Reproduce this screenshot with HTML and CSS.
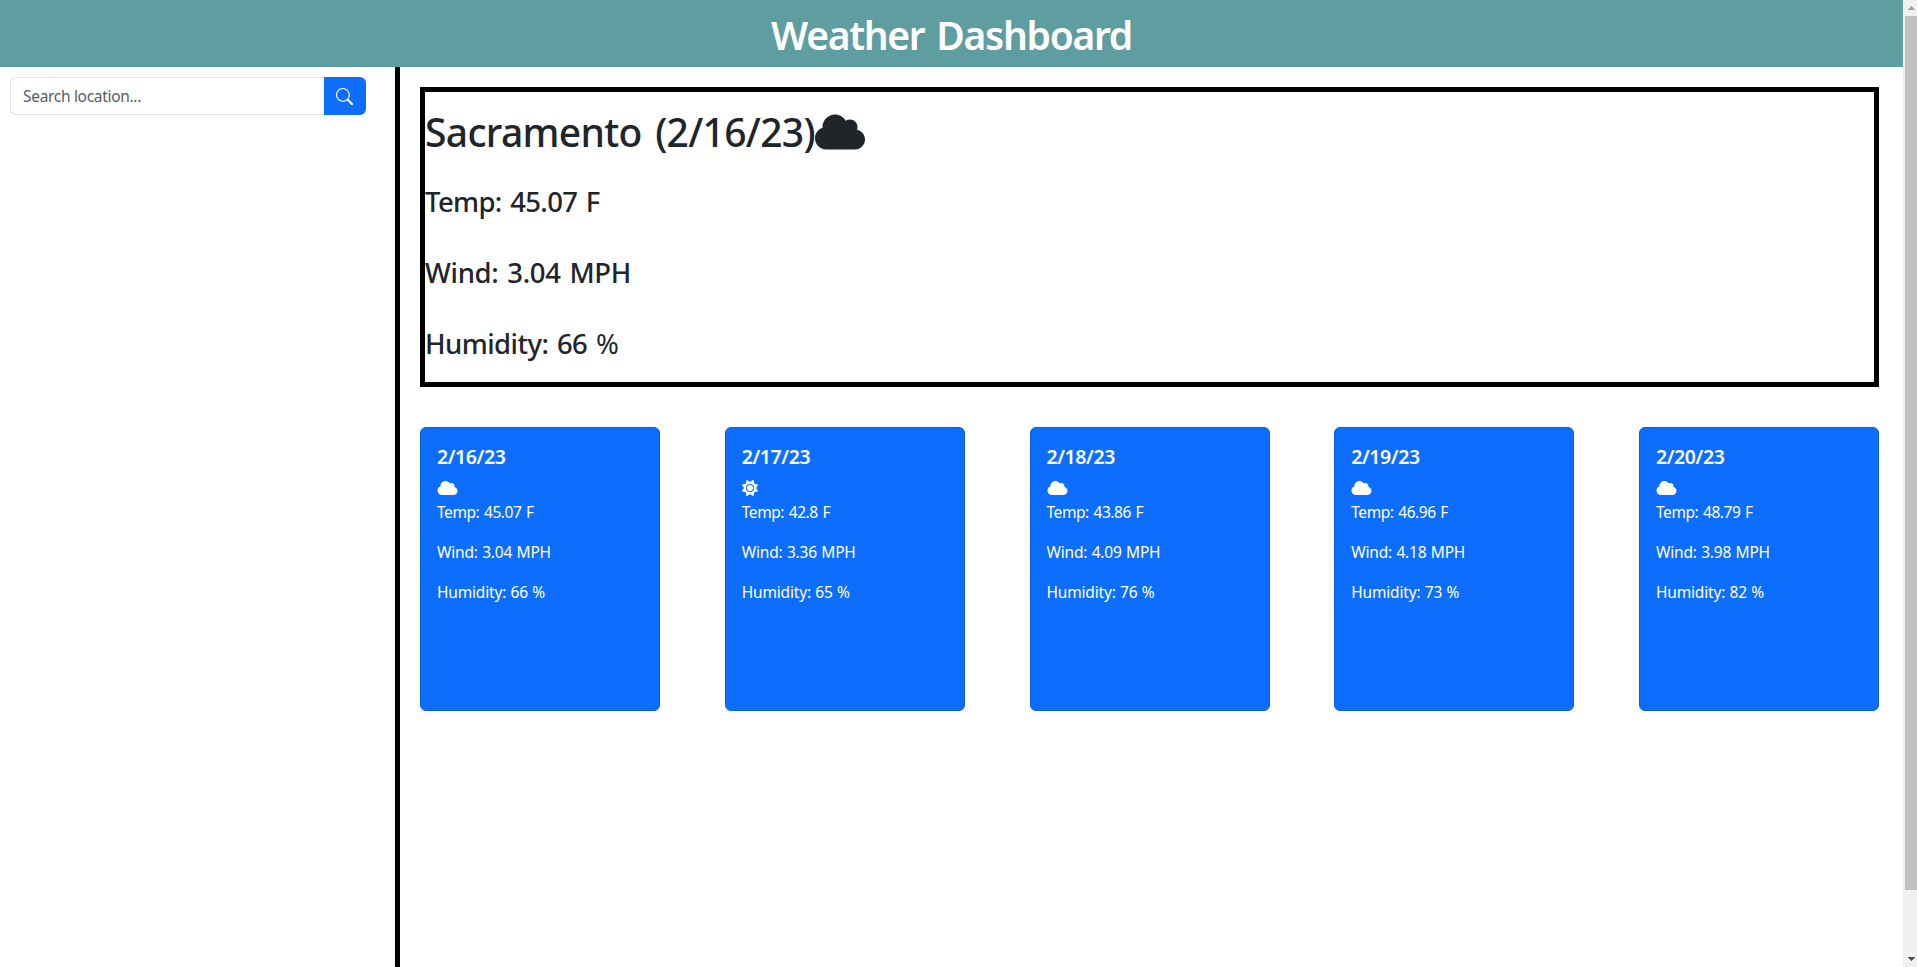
FILE: index.html
```
<!DOCTYPE html>
<html lang="en">
<head>
<meta charset="utf-8">
<title>Weather Dashboard</title>
<link rel="stylesheet" href="styles.css">
</head>
<body>
<svg class="sprite" aria-hidden="true">
  <symbol id="cloud" viewBox="0 0 640 512"><path d="M0 336c0 79.500 64.500 144 144 144H512c70.700 0 128-57.300 128-128c0-61.900-44-113.600-102.400-125.400c4.100-10.700 6.400-22.400 6.400-34.600c0-53-43-96-96-96c-19.700 0-38.100 6-53.300 16.200C367 64.200 315.300 32 256 32C167.600 32 96 103.600 96 192c0 2.700 .1 5.400 .2 8.100C40.200 219.800 0 273.200 0 336z"/></symbol>
  <symbol id="sun" viewBox="0 0 512 512"><path d="M361.5 1.2c5 2.100 8.600 6.600 9.600 11.900L391 121l107.900 19.800c5.300 1 9.800 4.600 11.900 9.600s1.500 10.700-1.600 15.200L446.900 256l62.300 90.300c3.100 4.500 3.700 10.200 1.600 15.200s-6.600 8.600-11.900 9.600L391 391 371.100 498.900c-1 5.300-4.600 9.800-9.600 11.900s-10.700 1.500-15.200-1.600L256 446.900l-90.300 62.300c-4.500 3.100-10.200 3.700-15.200 1.600s-8.600-6.600-9.600-11.900L121 391 13.100 371.100c-5.300-1-9.800-4.600-11.900-9.600s-1.500-10.700 1.600-15.200L65.100 256 2.800 165.700c-3.100-4.500-3.700-10.200-1.600-15.200s6.600-8.600 11.900-9.600L121 121 140.900 13.100c1-5.300 4.600-9.800 9.600-11.900s10.700-1.500 15.200 1.600L256 65.100 346.300 2.800c4.500-3.100 10.200-3.700 15.200-1.600zM160 256a96 96 0 1 1 192 0 96 96 0 1 1 -192 0zm224 0a128 128 0 1 0 -256 0 128 128 0 1 0 256 0z"/></symbol>
</svg>
<div class="window">
  <div class="page">
    <header class="header"><h1 class="title">Weather Dashboard</h1></header>
    <div class="content">
      <aside class="sidebar">
        <form class="search">
          <input class="search-input" type="text" placeholder="Search location...">
          <button class="search-button" type="button" aria-label="Search">
            <svg width="17" height="17" viewBox="0 0 16 16" fill="currentColor"><path d="M11.742 10.344a6.500 6.500 0 1 0-1.397 1.398h-.001c.03.040.062.078.098.115l3.850 3.850a1 1 0 0 0 1.415-1.414l-3.850-3.850a1.007 1.007 0 0 0-.115-.1zM12 6.500a5.500 5.500 0 1 1-11 0 5.500 5.500 0 0 1 11 0z"/></svg>
          </button>
        </form>
      </aside>
      <main class="main">
        <section class="current">
          <h2 class="city"><span>Sacramento (2/16/23)</span><svg class="city-icon"><use href="#cloud"/></svg></h2>
          <p class="reading reading-temp">Temp: 45.07 F</p>
          <p class="reading reading-wind">Wind: 3.04 MPH</p>
          <p class="reading reading-humidity">Humidity: 66 <span class="percent">%</span></p>
        </section>
        <section class="forecast">
          <article class="card">
            <h3 class="date">2/16/23</h3>
            <svg class="icon icon-cloud"><use href="#cloud"/></svg>
            <p class="line temp">Temp: 45.07 F</p><p class="line">Wind: 3.04 MPH</p><p class="line">Humidity: 66 %</p>
          </article>
          <article class="card">
            <h3 class="date">2/17/23</h3>
            <svg class="icon icon-sun"><use href="#sun"/></svg>
            <p class="line temp">Temp: 42.8 F</p><p class="line">Wind: 3.36 MPH</p><p class="line">Humidity: 65 %</p>
          </article>
          <article class="card">
            <h3 class="date">2/18/23</h3>
            <svg class="icon icon-cloud"><use href="#cloud"/></svg>
            <p class="line temp">Temp: 43.86 F</p><p class="line">Wind: 4.09 MPH</p><p class="line">Humidity: 76 %</p>
          </article>
          <article class="card">
            <h3 class="date">2/19/23</h3>
            <svg class="icon icon-cloud"><use href="#cloud"/></svg>
            <p class="line temp">Temp: 46.96 F</p><p class="line">Wind: 4.18 MPH</p><p class="line">Humidity: 73 %</p>
          </article>
          <article class="card">
            <h3 class="date">2/20/23</h3>
            <svg class="icon icon-cloud"><use href="#cloud"/></svg>
            <p class="line temp">Temp: 48.79 F</p><p class="line">Wind: 3.98 MPH</p><p class="line">Humidity: 82 %</p>
          </article>
        </section>
      </main>
    </div>
  </div>
  <div class="scrollbar">
    <svg class="arrow arrow-up" width="7" height="4" viewBox="0 0 7 4" shape-rendering="crispEdges"><path d="M3 0h1v1h1v1h1v1h1v1H0V3h1V2h1V1h1z"/></svg>
    <div class="thumb"></div>
    <svg class="arrow arrow-down" width="7" height="4" viewBox="0 0 7 4" shape-rendering="crispEdges"><path d="M0 0h7v1H6v1H5v1H4v1H3V3H2V2H1V1H0z"/></svg>
  </div>
</div>
</body>
</html>
```
FILE: styles.css
```
* { box-sizing: border-box; margin: 0; padding: 0; }

body {
  height: 100vh;
  overflow: hidden;
  background: #fff;
  color: #212529;
  font-family: "Noto Sans", "Open Sans", sans-serif;
  font-size: 15.5px;
}

.sprite { display: none; }
.window { display: flex; height: 100%; }
.page { flex: 1; display: flex; flex-direction: column; }

.header { height: 67px; background: #5f9ea0; color: #fff; text-align: center; }
.title {
  font-size: 39px;
  font-weight: 600;
  line-height: 69px;
  letter-spacing: -1.3px;
  word-spacing: 3px;
}

.content { flex: 1; display: flex; }
.sidebar { width: 400px; padding: 10px 29px 0 10px; border-right: 5px solid #000; }

.search { display: flex; height: 38px; }
.search-input {
  flex: 1;
  min-width: 0;
  padding: 0 12px;
  border: 1px solid #dee2e6;
  border-right: 0;
  border-radius: 6px 0 0 6px;
  font: inherit;
  letter-spacing: -0.31px;
}
.search-input::placeholder { color: #595c5f; opacity: 1; }
.search-button {
  display: flex;
  align-items: center;
  justify-content: center;
  width: 42px;
  padding-right: 1px;
  border: 0;
  border-radius: 0 6px 6px 0;
  background: #0d6efd;
  color: #fff;
}

.main { flex: 1; padding: 20px 24px 0 20px; }
.current { height: 300px; padding-top: 16px; border: 5px solid #000; }
.city {
  display: flex;
  align-items: center;
  height: 48px;
  margin-bottom: 10px;
  font-size: 39px;
  font-weight: 500;
  line-height: 48px;
  letter-spacing: -0.68px;
  word-spacing: 4px;
}
.city-icon { width: 50px; height: 40px; fill: #212529; }
.reading { font-size: 27.5px; font-weight: 500; line-height: 71px; word-spacing: 2px; }
.reading-temp { letter-spacing: -0.65px; }
.reading-wind { letter-spacing: -0.33px; }
.reading-humidity { letter-spacing: -0.55px; }
.percent { font-weight: 400; }

.forecast { display: flex; justify-content: space-between; margin-top: 40px; }
.card {
  width: 240px;
  height: 284px;
  padding: 16px;
  border: 1px solid #0b5fd9;
  border-radius: 6px;
  background: #0d6efd;
  color: #fff;
}
.date { padding-top: 1px; font-size: 19.5px; font-weight: 600; line-height: 24px; letter-spacing: -0.42px; }
.icon { display: block; height: 16px; margin-top: 11px; fill: #fff; }
.icon-cloud { width: 21px; }
.icon-sun { width: 16px; }
.line { line-height: 32px; margin-bottom: 8px; letter-spacing: -0.18px; word-spacing: 0.5px; }
.temp { letter-spacing: -0.42px; word-spacing: 1px; }

.scrollbar {
  display: flex;
  flex-direction: column;
  width: 14px;
  padding: 6px 0 6px 2px;
  background: #f0f0f0;
}
.arrow { margin-left: 3px; }
.arrow-up { fill: #a3a3a3; }
.arrow-down { margin-top: auto; fill: #505050; }
.thumb { height: 874px; margin-top: 6px; background: #c1c1c1; }
```
